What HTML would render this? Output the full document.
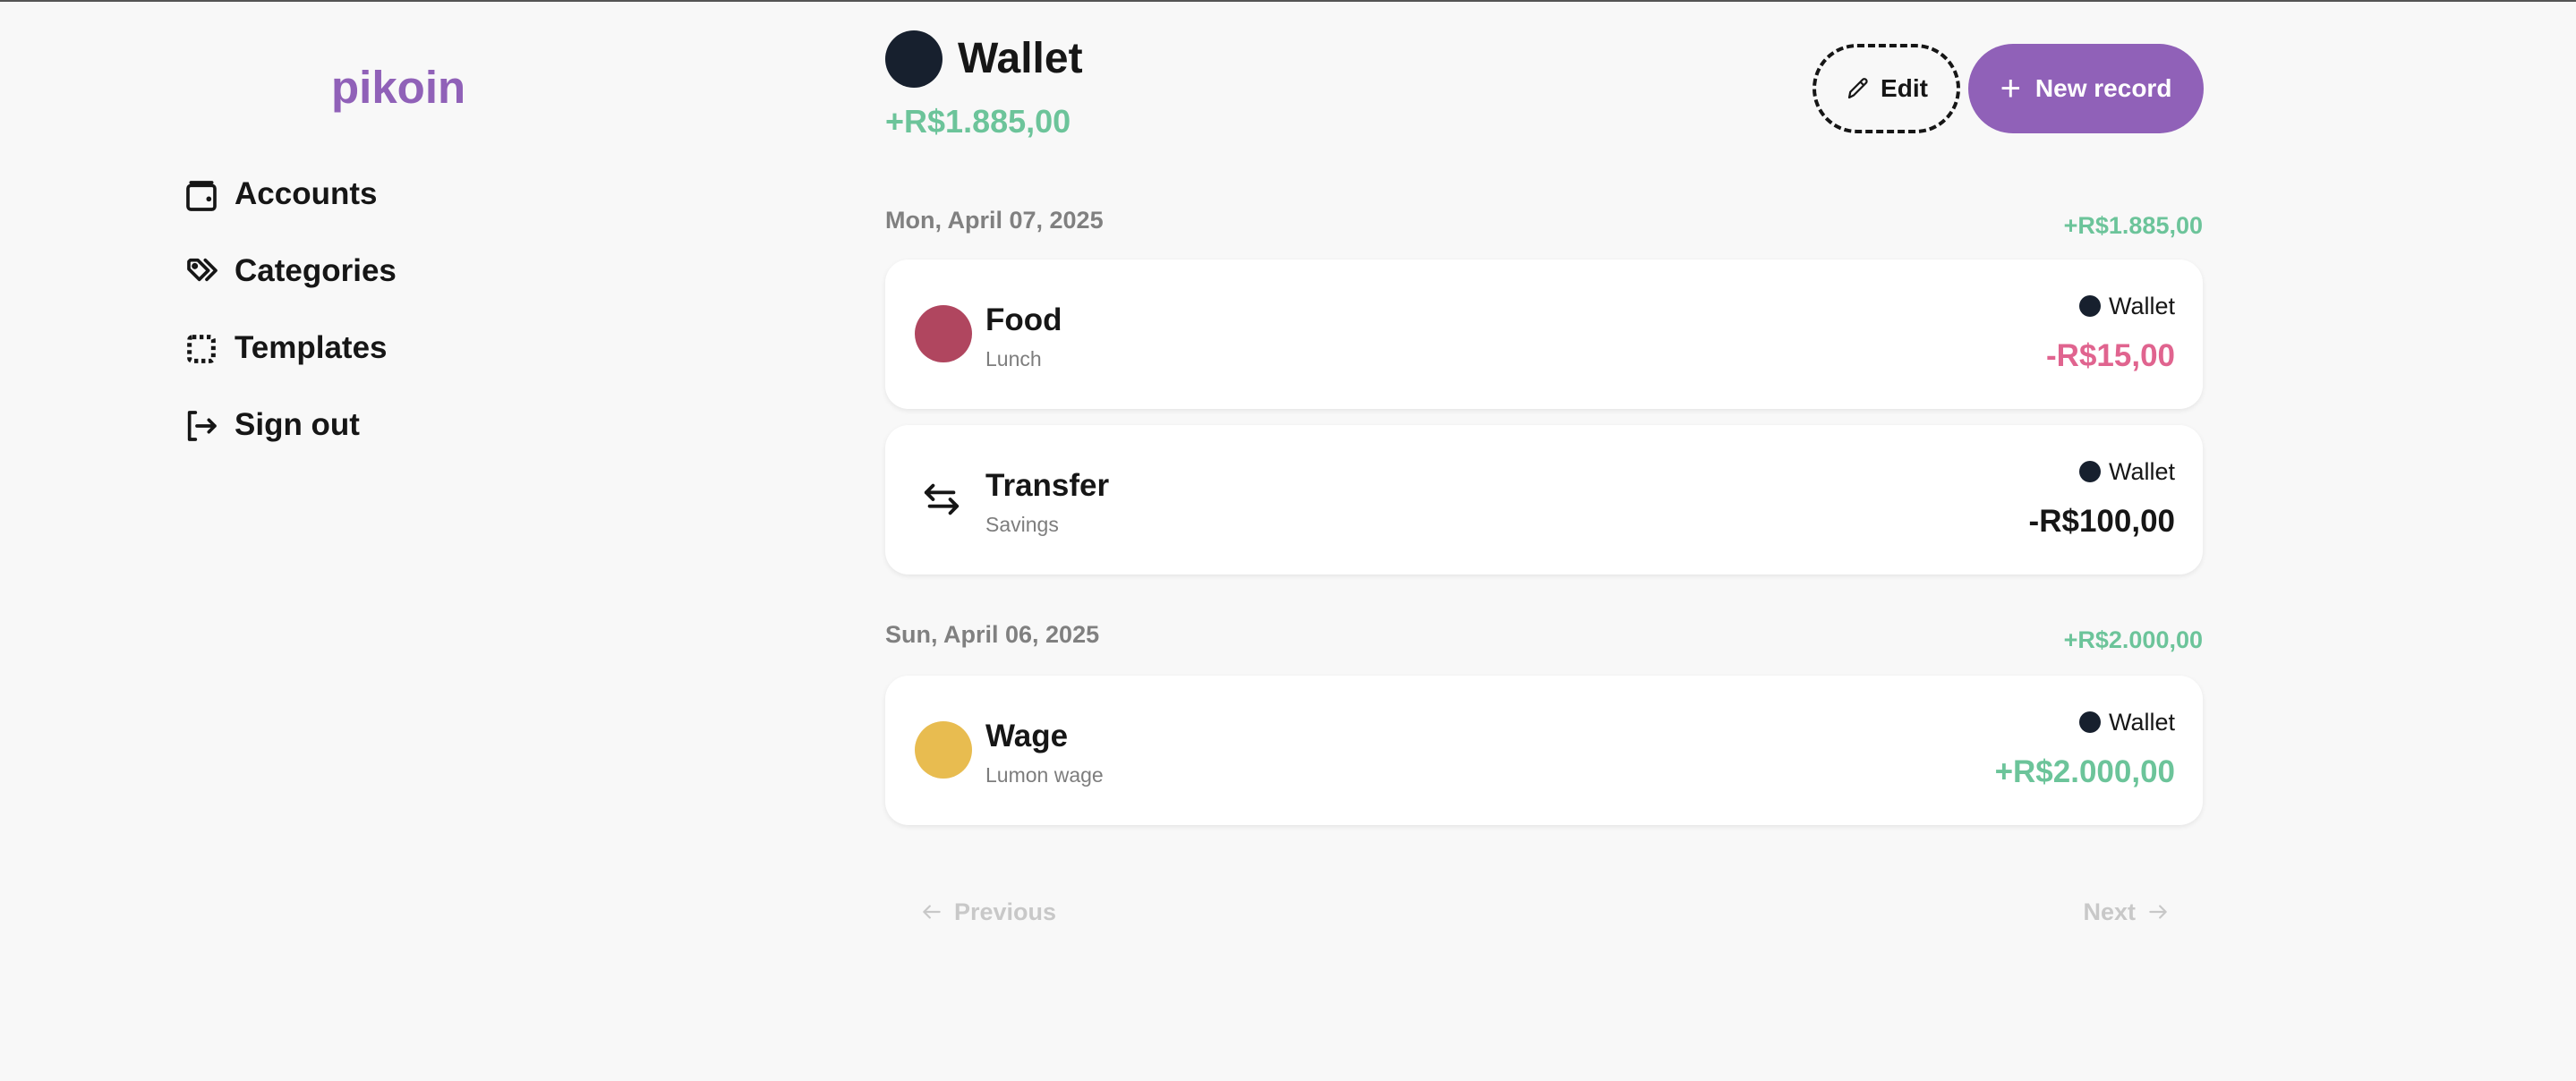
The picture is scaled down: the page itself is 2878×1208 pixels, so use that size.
<!DOCTYPE html>
<html><head><meta charset="utf-8">
<style>
*{margin:0;padding:0;box-sizing:border-box}
html,body{width:2878px;height:1208px;overflow:hidden}
body{background:#f8f8f8;font-family:"Liberation Sans",sans-serif;color:#161616;position:relative;border-top:2px solid #555}
.a{position:absolute;white-space:nowrap}
.nav{font-size:35px;font-weight:700;line-height:40px;left:262px}
.ic{position:absolute;left:205px}
.card{position:absolute;left:989px;width:1472px;height:167px;background:#fff;border-radius:26px;box-shadow:0 2px 6px rgba(0,0,0,0.08)}
.dot{position:absolute;border-radius:50%}
.t{position:absolute;left:112px;top:48px;font-size:35px;font-weight:700;line-height:40px}
.s{position:absolute;left:112px;top:98px;font-size:23px;color:#7d7d7d;line-height:26px}
.w{position:absolute;right:31px;top:36px;font-size:27px;line-height:32px}
.w:before{content:"";display:inline-block;width:24px;height:24px;border-radius:50%;background:#17202e;margin-right:9px;vertical-align:-3px}
.amt{position:absolute;right:31px;top:88px;font-size:35px;font-weight:700;line-height:40px}
.date{font-size:27px;font-weight:700;color:#808080;line-height:30px;left:989px}
.tot{font-size:27px;font-weight:700;color:#6cc49a;line-height:30px;right:417px}
</style></head><body>
<div class="a" style="left:370px;top:68px;font-size:51px;font-weight:900;color:#9061b8;line-height:56px">pikoin</div>

<svg class="ic" style="top:197px" width="40" height="40" viewBox="0 0 24 24" fill="none" stroke="#161616" stroke-width="2.2" stroke-linecap="round" stroke-linejoin="round"><rect x="3" y="5" width="18" height="16" rx="2"/><path d="M5 3h14"/><circle cx="17" cy="14" r="0.6" fill="#161616"/></svg>
<div class="a nav" style="top:195px">Accounts</div>
<svg class="ic" style="top:282px" width="42" height="40" viewBox="0 0 24 24" fill="none" stroke="#161616" stroke-width="2.2" stroke-linecap="round" stroke-linejoin="round"><path d="M3 5v5l7 7 6-6-7-7H4z"/><path d="M14 4l7 7-6 6"/><circle cx="7" cy="8" r="1"/></svg>
<div class="a nav" style="top:281px">Categories</div>
<svg class="ic" style="top:368px" width="40" height="40" viewBox="0 0 24 24" fill="none" stroke="#161616" stroke-width="3" stroke-dasharray="2.6 2.2"><rect x="4" y="4" width="16" height="16" rx="2"/></svg>
<div class="a nav" style="top:367px">Templates</div>
<svg class="ic" style="top:454px" width="40" height="40" viewBox="0 0 24 24" fill="none" stroke="#161616" stroke-width="2.2" stroke-linecap="round" stroke-linejoin="round"><path d="M8 3H4v18h4"/><path d="M9 12h12M17 8l4 4-4 4"/></svg>
<div class="a nav" style="top:453px">Sign out</div>

<div class="dot" style="left:989px;top:32px;width:64px;height:64px;background:#17202e"></div>
<div class="a" style="left:1070px;top:36px;font-size:48px;font-weight:700;line-height:56px">Wallet</div>
<div class="a" style="left:989px;top:114px;font-size:36px;font-weight:700;color:#6cc49a;line-height:40px">+R$1.885,00</div>

<div class="a" style="left:2025px;top:47px;width:165px;height:100px;border:4px dashed #161616;border-radius:50px;display:flex;align-items:center;justify-content:center;font-size:28px;font-weight:700">
<svg width="30" height="30" viewBox="0 0 24 24" fill="none" stroke="#161616" stroke-width="1.8" stroke-linejoin="round" style="margin-right:10px"><path d="M4 20l1-5L16 4a2 2 0 013 3L8 18z"/><path d="M14 6l3 3"/></svg>Edit</div>
<div class="a" style="left:2199px;top:47px;width:263px;height:100px;background:#9061b8;border-radius:50px;display:flex;align-items:center;justify-content:center;font-size:28px;font-weight:700;color:#fff">
<span style="font-size:40px;font-weight:300;margin-right:16px;line-height:28px">+</span>New record</div>

<div class="a date" style="top:229px">Mon, April 07, 2025</div>
<div class="a tot" style="top:235px">+R$1.885,00</div>

<div class="card" style="top:288px">
<div class="dot" style="left:33px;top:51px;width:64px;height:64px;background:#b0465f"></div>
<div class="t">Food</div><div class="s">Lunch</div>
<div class="w">Wallet</div><div class="amt" style="color:#e0648f">-R$15,00</div>
</div>
<div class="card" style="top:473px">
<svg style="position:absolute;left:40px;top:60px" width="46" height="46" viewBox="0 0 24 24" fill="none" stroke="#161616" stroke-width="2" stroke-linecap="round" stroke-linejoin="round"><path d="M3 8h16M7 4L3 8l4 4"/><path d="M21 16H5M17 12l4 4-4 4"/></svg>
<div class="t">Transfer</div><div class="s">Savings</div>
<div class="w">Wallet</div><div class="amt">-R$100,00</div>
</div>

<div class="a date" style="top:692px">Sun, April 06, 2025</div>
<div class="a tot" style="top:698px">+R$2.000,00</div>
<div class="card" style="top:753px">
<div class="dot" style="left:33px;top:51px;width:64px;height:64px;background:#e8bc50"></div>
<div class="t">Wage</div><div class="s">Lumon wage</div>
<div class="w">Wallet</div><div class="amt" style="color:#6cc49a">+R$2.000,00</div>
</div>

<div class="a" style="left:1028px;top:1002px;font-size:27px;font-weight:700;color:#c8c8c8;line-height:30px">
<svg width="26" height="26" viewBox="0 0 24 24" fill="none" stroke="#c8c8c8" stroke-width="2" stroke-linecap="round" stroke-linejoin="round" style="vertical-align:-4px;margin-right:12px"><path d="M20 12H4M10 6l-6 6 6 6"/></svg>Previous</div>
<div class="a" style="right:454px;top:1002px;font-size:27px;font-weight:700;color:#c8c8c8;line-height:30px">Next<svg width="26" height="26" viewBox="0 0 24 24" fill="none" stroke="#c8c8c8" stroke-width="2" stroke-linecap="round" stroke-linejoin="round" style="vertical-align:-4px;margin-left:12px"><path d="M4 12h16M14 6l6 6-6 6"/></svg></div>
</body></html>
